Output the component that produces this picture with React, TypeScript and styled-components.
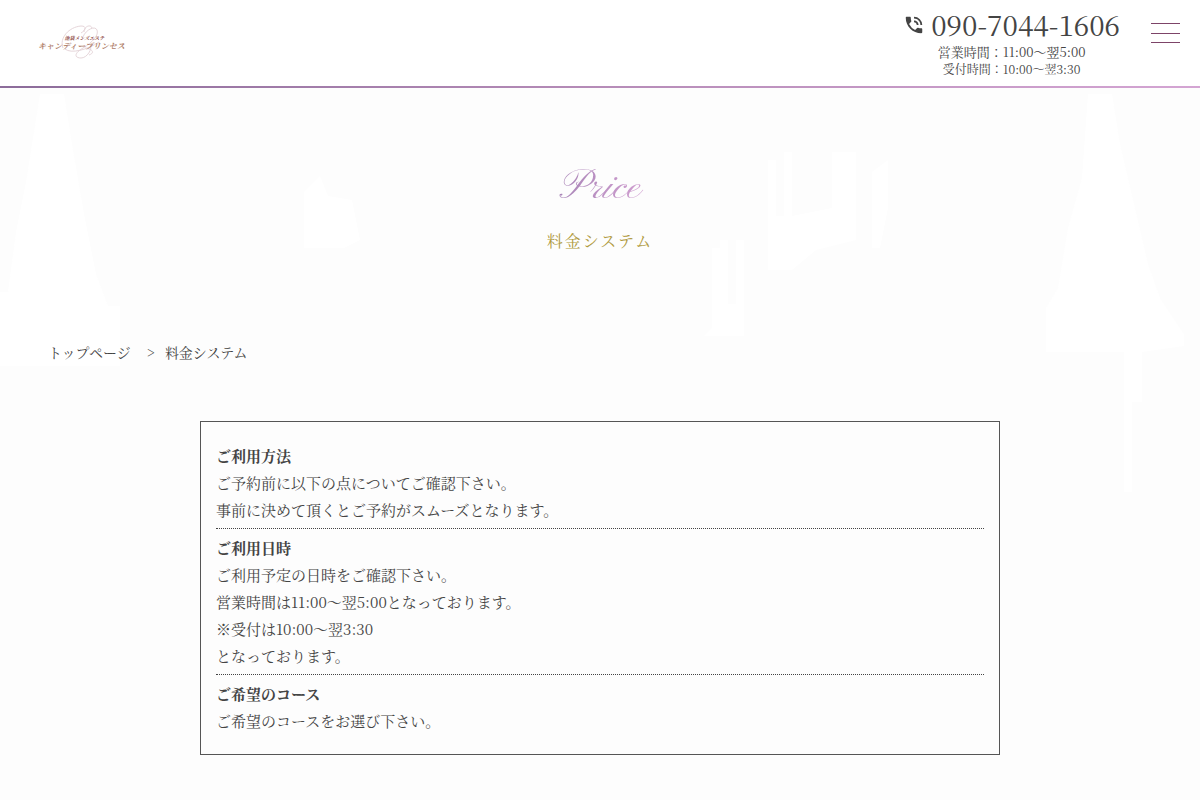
import React from "react";
import styled, { createGlobalStyle } from "styled-components";
import { MdPhoneInTalk } from "react-icons/md";

const serif = `"Noto Serif CJK JP", "Noto Serif JP", "Liberation Serif", "Noto Sans CJK JP", serif`;

const GlobalStyle = createGlobalStyle`
  *, *::before, *::after { box-sizing: border-box; }
  body {
    margin: 0;
    background: #fdfdfd;
    color: #444;
    font-family: ${serif};
    font-weight: 400;
    font-size: 15px;
    line-height: 27px;
  }
  h1, h2, p, ol { margin: 0; padding: 0; }
  a { color: inherit; text-decoration: none; }
`;

const Page = styled.div`
  position: relative;
  min-height: 100vh;
  padding-bottom: 45px;
`;

const Backdrop = styled.svg`
  position: absolute;
  inset: 88px 0 auto 0;
  width: 100%;
  z-index: -1;
`;

const Header = styled.header`
  display: flex;
  justify-content: space-between;
  align-items: flex-start;
  height: 88px;
  padding: 0 20px 0 38px;
  background: #fff;
  border-bottom: 2px solid;
  border-image: linear-gradient(90deg, #8c6c9a, #b68cb8 50%, #d4a5d3) 1;
`;

const Logo = styled.a`
  display: grid;
  grid-template-rows: 17px 10px 9px;
  justify-items: center;
  margin-top: 24px;
  color: #b0806a;
  font-style: italic;
  font-weight: 700;
  white-space: nowrap;
  > * { grid-column: 1; }
`;

const LogoSwirl = styled.svg`
  grid-row: 1 / 4;
  width: 48px;
  height: 36px;
`;

const LogoArea = styled.span`
  grid-row: 1;
  align-self: end;
  padding-left: 6px;
  font-size: 5px;
  line-height: 7px;
  color: #8a4038;
`;

const LogoName = styled.span`
  grid-row: 2;
  font-size: 8px;
  line-height: 10px;
`;

const HeaderSide = styled.div`
  display: flex;
  gap: 31px;
`;

const Contact = styled.div`
  display: flex;
  flex-direction: column;
  padding-top: 8px;
`;

const Phone = styled.a`
  display: flex;
  align-items: center;
  gap: 6px;
  padding-bottom: 2px;
  font-size: 28px;
  line-height: 33px;
  svg { width: 22px; height: 22px; }
`;

const Hours = styled.p<{ $small?: boolean }>`
  text-align: center;
  font-size: ${(p) => (p.$small ? 12 : 13)}px;
  line-height: 17px;
`;

const MenuButton = styled.button`
  display: flex;
  flex-direction: column;
  justify-content: space-between;
  width: 29px;
  height: 20px;
  margin-top: 23px;
  padding: 0;
  border: 0;
  background: none;
  span { height: 1px; width: 100%; background: #7d4468; }
`;

const Title = styled.h1`
  display: flex;
  flex-direction: column;
  align-items: center;
  padding-top: 72px;
  font-weight: 400;
`;

const TitleScript = styled.span`
  padding: 0 8px;
  font-family: "Pinyon Script", "Liberation Serif", cursive;
  font-size: 42px;
  line-height: 56px;
  background: linear-gradient(90deg, #a583b5, #d3a0d2);
  background-clip: text;
  color: transparent;
`;

const TitleText = styled.span`
  margin-top: 10px;
  font-size: 16px;
  line-height: 30px;
  letter-spacing: 2px;
  color: #b09a3e;
`;

const Crumbs = styled.ol`
  display: flex;
  padding: 83px 48px 0;
  list-style: none;
  font-size: 14px;
  line-height: 27px;
  li + li::before { content: ">"; margin: 0 10px 0 16px; }
`;

const Guide = styled.main`
  width: calc(100% - 32px);
  max-width: 800px;
  margin: 55px auto 0;
  padding: 20px 15px 15px;
  border: 1px solid #555;
`;

const Step = styled.section`
  padding-bottom: 5px;
  & + & { padding-top: 5px; border-top: 1px dotted #444; }
`;

const StepTitle = styled.h2`
  font-size: 15px;
  line-height: 27px;
  font-weight: 700;
`;

const steps = [
  {
    title: "ご利用方法",
    lines: ["ご予約前に以下の点についてご確認下さい。", "事前に決めて頂くとご予約がスムーズとなります。"],
  },
  {
    title: "ご利用日時",
    lines: [
      "ご利用予定の日時をご確認下さい。",
      "営業時間は11:00〜翌5:00となっております。",
      "※受付は10:00〜翌3:30",
      "となっております。",
    ],
  },
  { title: "ご希望のコース", lines: ["ご希望のコースをお選び下さい。"] },
];

export default function App() {
  return (
    <Page>
      <GlobalStyle />
      <Backdrop viewBox="0 0 1200 420" aria-hidden="true">
        <g fill="#fff">
          <path d="M40 6h24l8 50 12 70 12 60 12 32h12v60H0v-74h8l8-60 10-50z" />
          <path d="M1088 6h24l8 50 14 60 14 60 12 34 24 36v12l-42 6v50h-10v90h-8v-140h-78v-44l12-20 10-60 14-50z" />
          <path d="M304 104l16-16 8 20 24 4 8 40-16 8h-40zM768 72h8v56h8v-64h8v64l40-8v-56h24v88l-40 10-24 20h-24z" />
          <path d="M712 160h8v-8h8v64h8v-64h8v96h-40l8-8zM872 84l16-12v48l-8 40h-8z" />
        </g>
      </Backdrop>
      <Header>
        <Logo href="#">
          <LogoSwirl viewBox="0 0 48 36" fill="none" stroke="#e6d6da" strokeWidth="1" aria-hidden="true">
            <path d="M6 24C2 14 12 3 24 2c6 0 5 4 0 7M25 16C27 6 38 1 40 6s-4 12-14 18-8 10-2 10 12-9 9-14M8 25c6 5 22 1 34-7M28 24c8 1 10 5 4 7M27 8c0-6 7-8 8-4" />
          </LogoSwirl>
          <LogoArea>池袋メンズエステ</LogoArea>
          <LogoName>キャンディープリンセス</LogoName>
        </Logo>
        <HeaderSide>
          <Contact>
            <Phone href="tel:090-7044-1606">
              <MdPhoneInTalk aria-hidden="true" />
              090-7044-1606
            </Phone>
            <Hours>営業時間：11:00〜翌5:00</Hours>
            <Hours $small>受付時間：10:00〜翌3:30</Hours>
          </Contact>
          <MenuButton type="button" aria-label="メニュー">
            <span />
            <span />
            <span />
          </MenuButton>
        </HeaderSide>
      </Header>
      <Title>
        <TitleScript>Price</TitleScript>
        <TitleText>料金システム</TitleText>
      </Title>
      <nav>
        <Crumbs>
          <li><a href="#">トップページ</a></li>
          <li>料金システム</li>
        </Crumbs>
      </nav>
      <Guide>
        {steps.map((s) => (
          <Step key={s.title}>
            <StepTitle>{s.title}</StepTitle>
            {s.lines.map((l) => (
              <p key={l}>{l}</p>
            ))}
          </Step>
        ))}
      </Guide>
    </Page>
  );
}
